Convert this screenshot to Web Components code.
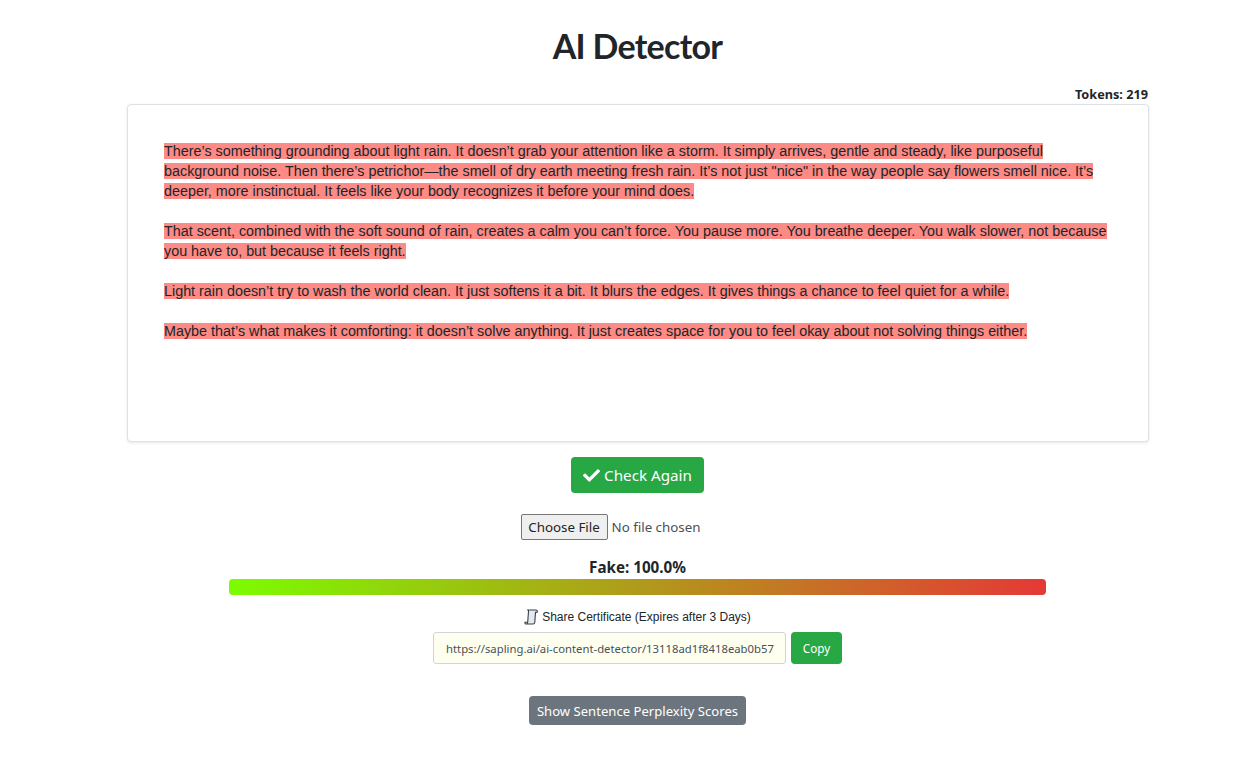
<!DOCTYPE html>
<html lang="en"><head><meta charset="utf-8"><title>AI Detector</title>
<style>
html,body{margin:0;padding:0;background:#fff}
body{font-family:"Open Sans","Noto Sans",sans-serif;color:#212529}
</style></head><body>
<template id="t-page"><style>
:host{display:flex;flex-direction:column;align-items:center;width:1248px;height:763px;overflow:hidden;box-sizing:border-box;padding:24px 0 0 27px}
h1{margin:0;font:700 34px/44px Lato,sans-serif;letter-spacing:-.7px;color:#212529;height:44px}
.wrap{width:1022px;margin:19px 0 0 1px}
.tok{display:block;text-align:right;font:700 12.7px/16px "Noto Sans",sans-serif;height:18px;margin-top:-1px;padding-right:1px}
</style>
<h1>AI Detector</h1>
<div class="wrap"><span class="tok">Tokens: 219</span><slot name="editor"></slot></div>
<slot></slot></template>

<template id="t-editor"><style>
:host{display:block;box-sizing:border-box;height:338px;border:1px solid #dee2e6;border-radius:4px;box-shadow:0 1px 3px rgba(0,0,0,.1);padding:36px 36px 0;background:#fff;font:14.35px/20px "Liberation Sans",Arial,sans-serif;color:#212529}
::slotted(p){margin:0 0 20px}
</style><slot></slot></template>

<template id="t-hl"><style>:host{display:inline;background:#fd8a85}</style><slot></slot></template>

<template id="t-btn"><style>
:host{display:inline-flex;align-items:center;justify-content:center;box-sizing:border-box;border-radius:4px;color:#fff;font-family:"Noto Sans",sans-serif;white-space:nowrap}
:host([kind=check]){background:#28a745;height:36px;width:133px;font-size:15.2px;margin-top:15px}
:host([kind=copy]){background:#28a745;height:32px;width:51px;font-size:11.7px}
:host([kind=show]){background:#6c757d;height:29px;width:217px;font-size:13.1px;margin-top:32px}
</style><slot></slot></template>

<template id="t-file"><style>
:host{display:flex;align-items:center;margin:21px 0 0 -54px;height:26px;font:13.33px "Noto Sans",sans-serif;color:#495057;gap:4px}
.b{box-sizing:border-box;width:87px;height:26px;border:1px solid #767676;border-radius:2px;background:#efefef;color:#212529;display:flex;align-items:center;justify-content:center}
</style><span class="b">Choose File</span><span>No file chosen</span></template>

<template id="t-meter"><style>
:host{display:block;width:817px;margin-top:16px;text-align:center}
.l{font:700 15.2px/23px "Noto Sans",sans-serif;height:23px;color:#212529}
.bar{height:16px;border-radius:4px;background:linear-gradient(90deg,#7cfc00,#e53935)}
</style><div class="l"><slot></slot></div><div class="bar"></div></template>

<template id="t-share"><style>
:host{display:flex;flex-direction:column;align-items:center;margin-top:12px}
.c{display:flex;align-items:center;gap:4px;height:20px;font:12px/20px "Liberation Sans",Arial,sans-serif;color:#212529}
svg{display:block}
.r{display:flex;gap:5px;margin-top:5px}
.u{box-sizing:border-box;width:353px;height:32px;border:1px solid #ced4da;border-radius:3px;background:#fffff0;color:#495057;font:11.3px/32px "Noto Sans",sans-serif;padding:0 12px;overflow:hidden;white-space:nowrap}
</style>
<div class="c"><svg width="14" height="16" viewBox="0 0 14 16" fill="none" stroke="#3a4048" stroke-width="1.1"><path d="M4 1h8c.9 0 1.400.6 1.400 1.400 0 .6-.4 1-1.200 1H11.500L10.800 13.300C10.700 14.400 10 15 9 15H2.500c.8-.3 1.100-.9 1.200-1.700L4.500 2.500C4.500 1.800 4.300 1.300 4 1z" fill="#e4e9ef"/><path d="M2.500 15C1.300 15 .7 14.300.9 13.200h3"/></svg><slot name="caption"></slot></div>
<div class="r"><div class="u"><slot name="url"></slot></div><slot name="copy"></slot></div></template>

<ai-page>
<ai-editor slot="editor">
<p><ai-hl>There’s something grounding about light rain. It doesn’t grab your attention like a storm. It simply arrives, gentle and steady, like purposeful background noise. Then there’s petrichor—the smell of dry earth meeting fresh rain. It’s not just "nice" in the way people say flowers smell nice. It’s deeper, more instinctual. It feels like your body recognizes it before your mind does.</ai-hl></p>
<p><ai-hl>That scent, combined with the soft sound of rain, creates a calm you can’t force. You pause more. You breathe deeper. You walk slower, not because you have to, but because it feels right.</ai-hl></p>
<p><ai-hl>Light rain doesn’t try to wash the world clean. It just softens it a bit. It blurs the edges. It gives things a chance to feel quiet for a while.</ai-hl></p>
<p><ai-hl>Maybe that’s what makes it comforting: it doesn’t solve anything. It just creates space for you to feel okay about not solving things either.</ai-hl></p>
</ai-editor>
<ai-btn kind="check"><svg width="17" height="17" viewBox="0 0 512 512" style="margin-right:4px;display:block"><path fill="#fff" d="M173.898 439.404l-166.400-166.400c-9.997-9.997-9.997-26.206 0-36.204l36.203-36.204c9.997-9.998 26.207-9.998 36.204 0L192 312.690 432.095 72.596c9.997-9.997 26.207-9.997 36.204 0l36.203 36.204c9.997 9.997 9.997 26.206 0 36.204l-294.400 294.401c-9.998 9.997-26.207 9.997-36.204-.001z"/></svg>Check Again</ai-btn>
<ai-file></ai-file>
<ai-meter>Fake: 100.0%</ai-meter>
<ai-share><span slot="caption">Share Certificate (Expires after 3 Days)</span><span slot="url">https://sapling.ai/ai-content-detector/13118ad1f8418eab0b57</span><ai-btn slot="copy" kind="copy">Copy</ai-btn></ai-share>
<ai-btn kind="show">Show Sentence Perplexity Scores</ai-btn>
</ai-page>
<script>
const def=(n,t)=>customElements.define(n,class extends HTMLElement{constructor(){super();this.attachShadow({mode:'open'}).appendChild(document.getElementById(t).content.cloneNode(true))}});
def('ai-page','t-page');def('ai-editor','t-editor');def('ai-hl','t-hl');def('ai-btn','t-btn');def('ai-file','t-file');def('ai-meter','t-meter');def('ai-share','t-share');
</script>
</body></html>
